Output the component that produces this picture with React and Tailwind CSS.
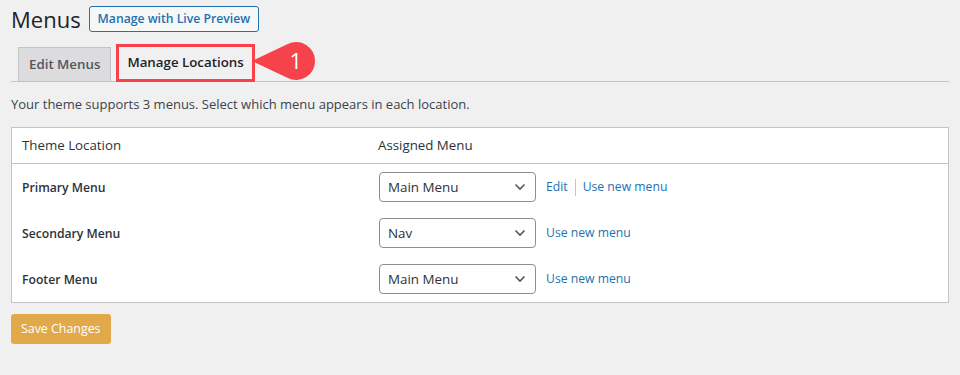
import React from "react";

const font = { fontFamily: '"Open Sans", "Liberation Sans", sans-serif' };

const Chevron = () => (
  <svg width="12" height="8" viewBox="0 0 12 8" className="text-[#50575e]">
    <path d="M1.5 1.5 L6 6 L10.5 1.5" fill="none" stroke="currentColor" strokeWidth="1.6" />
  </svg>
);

const Select = ({ value }) => (
  <div className="flex items-center justify-between w-[157px] h-[30px] border border-[#8c8f94] rounded-[4px] bg-white pl-2 pr-[9px] text-[13.4px] text-[#2c3338]">
    <span>{value}</span>
    <Chevron />
  </div>
);

const Marker = () => (
  <div className="absolute left-[136px] top-[-3px] w-[64px] h-[40px]">
    <svg width="64" height="40" viewBox="0 0 64 40">
      <path d="M0 20 L35.8 2.9 A19 19 0 1 1 35.8 37.1 Z" fill="#f5424b" />
    </svg>
    <span className="absolute left-[37px] top-[5px] text-white text-[22px] leading-[28px]">1</span>
  </div>
);

const rows = [
  { label: "Primary Menu", value: "Main Menu", edit: true },
  { label: "Secondary Menu", value: "Nav", edit: false },
  { label: "Footer Menu", value: "Main Menu", edit: false },
];

export default function App() {
  return (
    <div className="min-h-[375px] bg-[#f0f0f1] pl-[11px] pr-[11px] pt-[6px]" style={font}>
      <div className="flex items-center gap-[8px]">
        <h1 className="text-[22px] leading-[26px] text-[#1d2327] font-normal">Menus</h1>
        <div className="h-[26px] px-[8px] flex items-center border border-[#2271b1] rounded-[3px] bg-[#f6f7f7] text-[#2271b1] text-[12.2px] font-semibold">
          Manage with Live Preview
        </div>
      </div>

      <div className="mt-[15px] flex items-end border-b border-[#c3c4c7] h-[35px]">
        <div className="ml-[7px] h-[34px] px-[10px] flex items-center border border-b-0 border-[#c3c4c7] bg-[#dcdcde] text-[#50575e] text-[13.3px] font-semibold">
          Edit Menus
        </div>
        <div className="relative ml-[5px] mb-[-1px]">
          <div className="h-[38px] px-[8px] flex items-center border-[3px] border-[#f5424b] bg-[#f0f0f1] text-[#1d2327] text-[13.3px] font-semibold">
            Manage Locations
          </div>
          <Marker />
        </div>
      </div>

      <p className="mt-[13px] text-[13px] leading-[18px] text-[#3c434a]">
        Your theme supports 3 menus. Select which menu appears in each location.
      </p>

      <div className="mt-[14px] bg-white border border-[#c3c4c7]">
        <div className="grid grid-cols-[356px_1fr] h-[36px] items-center border-b border-[#c3c4c7] text-[13.3px] text-[#2c3338]">
          <div className="pl-[10px]">Theme Location</div>
          <div className="pl-[10px]">Assigned Menu</div>
        </div>
        {rows.map((r) => (
          <div key={r.label} className="grid grid-cols-[356px_1fr] h-[46px] items-center">
            <div className="pl-[10px] pt-[3px] text-[12.2px] font-[550] text-[#2c3338]">{r.label}</div>
            <div className="pl-[11px] flex items-center gap-[10px]">
              <Select value={r.value} />
              <div className="flex items-center pt-[1px] text-[12.2px] text-[#2271b1]">
                {r.edit && (
                  <>
                    <span>Edit</span>
                    <span className="mx-[7px] w-px h-[17px] bg-[#c3c4c7]"></span>
                  </>
                )}
                <span>Use new menu</span>
              </div>
            </div>
          </div>
        ))}
      </div>

      <div className="mt-[11px] inline-flex items-center h-[30px] px-[10px] rounded-[3px] bg-[#e2a94a] text-white text-[12.4px]">
        Save Changes
      </div>
    </div>
  );
}
